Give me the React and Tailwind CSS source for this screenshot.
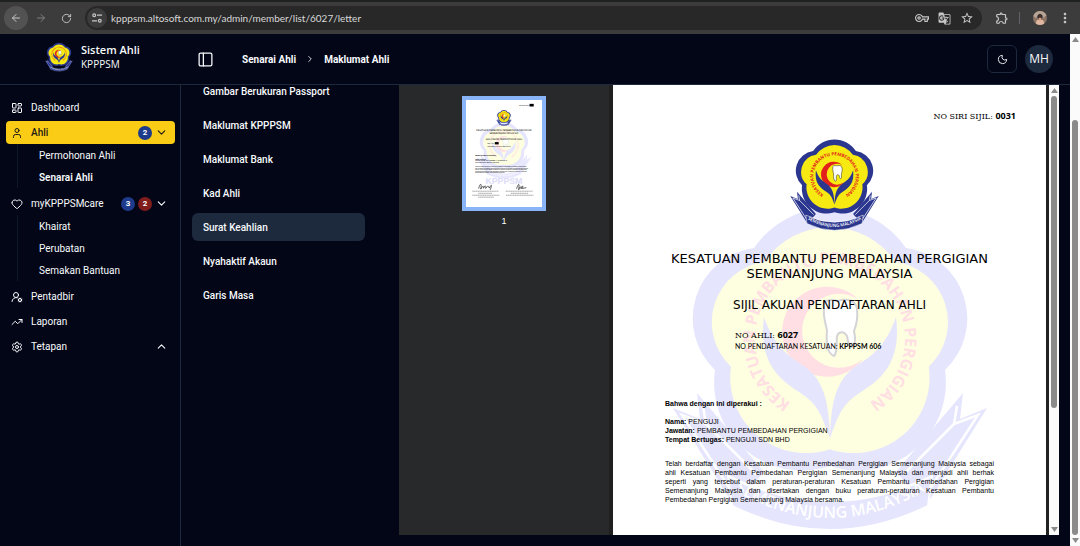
import { useId } from "react";
import {
  ArrowLeft, ArrowRight, ChevronDown, ChevronRight, ChevronUp, Heart, LayoutDashboard,
  Moon, PanelLeft, RotateCw, Settings, TrendingUp, User, UserRoundCog,
} from "lucide-react";
import { MdGTranslate, MdMoreVert, MdOutlineExtension, MdOutlineVpnKey, MdStarBorder } from "react-icons/md";

const FULL = { blue: "#2b378f", yellow: "#f6ea12", red: "#e3211c", line: "#333333" };
const PALE = { blue: "#e5e5fd", yellow: "#fefee0", red: "#ffdfe3", line: "#d4d4d8" };
const FLOWER =
  "M82 42A92 92 0 0 1 234 42A71 71 0 0 1 273 164A88 88 0 0 1 158 260A88 88 0 0 1 43 164A71 71 0 0 1 82 42Z";

function EmblemArt({ c }) {
  const id = useId();
  const leaf = "M92 111C102 140 116 150 132 160C152 174 157 196 158 232C150 212 148 200 130 188C108 174 86 158 92 111Z";
  const tail = "M25 187L92 266L62 300L1 202L28 213Z";
  const tailLine = "M31 200L34 218L10 209L60 286M34 218L84 268";
  return (
    <g>
      <path d={FLOWER} fill={c.blue} />
      <path d={FLOWER} fill={c.yellow} transform="translate(22 19.6) scale(.86)" />
      <path id={id + "t"} d="M121 198A75 75 0 1 1 195 198" fill="none" />
      <text fontFamily="'Open Sans', sans-serif" fontWeight="700" fontSize="16" fill={c.red} textAnchor="middle">
        <textPath href={"#" + id + "t"} startOffset="50%">KESATUAN PEMBANTU PEMBEDAHAN PERGIGIAN</textPath>
      </text>
      <path d="M186 93A45 45 0 1 0 191 153A37 37 0 1 1 186 93Z" fill={c.red} />
      <path
        d="M152 102C150 94 158 93 166 95C174 92 184 94 185 103C186 112 184 120 182 125C184 134 183 139 180 141C177 141 176 136 175 130C172 125 167 125 165 130C164 138 166 146 162 150C155 147 154 138 155 124C153 116 151 110 152 102Z"
        fill="#fff" stroke={c.line} strokeWidth="2"
      />
      <path d={leaf} fill={c.blue} />
      <path d={leaf} fill={c.blue} transform="translate(316 0) scale(-1 1)" />
      {["", "translate(316 0) scale(-1 1)"].map((t) => (
        <g key={t} transform={t}>
          <path d={tail} fill={c.blue} />
          <path d={tailLine} stroke="#fff" strokeWidth="2.5" fill="none" />
        </g>
      ))}
      <path d="M56 270Q158 320 260 270L256 300Q158 348 60 300Z" fill={c.blue} stroke="#fff" strokeWidth="2" />
      <path id={id + "b"} d="M40 270Q158 354 276 270" fill="none" />
      <text fontFamily="'Open Sans', sans-serif" fontWeight="600" fontSize="16" fill="#fff" textAnchor="middle">
        <textPath href={"#" + id + "b"} startOffset="50%">SEMENANJUNG MALAYSIA</textPath>
      </text>
    </g>
  );
}

function Emblem({ pale, className }) {
  return (
    <svg viewBox="0 0 316 326" className={className} aria-hidden="true">
      <EmblemArt c={pale ? PALE : FULL} />
    </svg>
  );
}

function BrowserBar() {
  const btn = "flex size-6 items-center justify-center rounded-full";
  return (
    <div className="flex h-[34px] shrink-0 items-center border-t-2 border-[#1f2020] bg-[#3c3c3c] pl-1 pr-[7px] text-[#c7c7c7]">
      <button aria-label="Back" className={btn + " bg-[#525252]"}><ArrowLeft size={12} /></button>
      <button aria-label="Forward" className={btn + " ml-px text-[#808080]"}><ArrowRight size={12} /></button>
      <button aria-label="Reload" className={btn + " ml-px"}><RotateCw size={11} /></button>
      <div className="ml-[7px] flex h-6 flex-1 items-center rounded-full bg-[#282828] pl-[2px] pr-2">
        <button aria-label="Site information" className="flex size-5 items-center justify-center rounded-full bg-[#3c3c3c]">
          <svg viewBox="0 0 12 12" className="size-3" fill="none" stroke="currentColor" strokeWidth="1.2">
            <circle cx="3.2" cy="3.2" r="1.4" /><path d="M6 3.2H11M1 8.8H6" /><circle cx="8.8" cy="8.8" r="1.4" />
          </svg>
        </button>
        <input
          aria-label="Address"
          readOnly
          className="ml-1 min-w-0 flex-1 bg-transparent font-[Lato,sans-serif] text-[10px] text-[#d8d8d8] outline-none"
          value="kpppsm.altosoft.com.my/admin/member/list/6027/letter"
        />
        <div className="flex items-center gap-[9px]">
          <button aria-label="Passwords"><MdOutlineVpnKey size={14} /></button>
          <button aria-label="Translate"><MdGTranslate size={13} /></button>
          <button aria-label="Bookmark"><MdStarBorder size={14} /></button>
        </div>
      </div>
      <button aria-label="Extensions" className="ml-[13px]"><MdOutlineExtension size={14} /></button>
      <span className="ml-[10px] h-3 w-px bg-[#5f6368]" />
      <button aria-label="Profile" className="ml-[13px] size-[14px] overflow-hidden rounded-full">
        <svg viewBox="0 0 14 14">
          <rect width="14" height="14" fill="#8b7466" />
          <path d="M0 0H14V4L10 7L7 2L3 7L0 5Z" fill="#b9a596" />
          <circle cx="7" cy="5.5" r="2.6" fill="#3b2f2c" />
          <path d="M2 14L4 9H10L12 14Z" fill="#e0b7a0" />
          <circle cx="7" cy="8" r="1.6" fill="#d59c80" />
        </svg>
      </button>
      <button aria-label="Menu" className="ml-[10px]"><MdMoreVert size={16} /></button>
    </div>
  );
}

function Badge({ tone, children }) {
  return (
    <span className={"flex size-[14px] items-center justify-center rounded-full text-[8px] font-bold text-white " + (tone === "red" ? "bg-[#7f1d1d]" : "bg-[#1e3a8a]")}>
      {children}
    </span>
  );
}

function NavRow({ icon: Icon, label, active, badges = [], chevron: Chevron }) {
  return (
    <a
      href="#"
      className={"flex h-[23px] items-center rounded-sm pl-[5px] pr-[7px] text-[10px] " + (active ? "bg-[#facc15] font-medium text-[#1c1917]" : "text-slate-50")}
    >
      <Icon size={12} strokeWidth={2} />
      <span className="ml-2 flex-1">{label}</span>
      <span className="flex items-center gap-[3px]">
        {badges.map(([n, tone]) => <Badge key={tone} tone={tone}>{n}</Badge>)}
      </span>
      {Chevron && <Chevron size={13} className="ml-[3px]" />}
    </a>
  );
}

function SubNav({ items }) {
  return (
    <div className="-mt-[2px] mb-[2px] ml-[11px] flex flex-col border-l border-slate-900 pl-[21px] text-[10px] text-slate-50">
      {items.map(([label, bold]) => (
        <a key={label} href="#" className={"flex h-[22px] items-center " + (bold ? "font-semibold" : "")}>{label}</a>
      ))}
    </div>
  );
}

function Sidebar() {
  return (
    <nav aria-label="Utama" className="flex w-[181px] shrink-0 flex-col gap-[2px] border-r border-slate-800 pl-[6px] pr-[5px] pt-[11px] font-[Roboto,sans-serif]">
      <NavRow icon={LayoutDashboard} label="Dashboard" />
      <NavRow icon={User} label="Ahli" active badges={[["2", "blue"]]} chevron={ChevronDown} />
      <SubNav items={[["Permohonan Ahli"], ["Senarai Ahli", true]]} />
      <NavRow icon={Heart} label="myKPPPSMcare" badges={[["3", "blue"], ["2", "red"]]} chevron={ChevronDown} />
      <SubNav items={[["Khairat"], ["Perubatan"], ["Semakan Bantuan"]]} />
      <NavRow icon={UserRoundCog} label="Pentadbir" />
      <NavRow icon={TrendingUp} label="Laporan" />
      <NavRow icon={Settings} label="Tetapan" chevron={ChevronUp} />
    </nav>
  );
}

function Header() {
  return (
    <header className="flex h-[51px] shrink-0 items-center border-b border-slate-800 pr-[17px] text-slate-50">
      <div className="flex w-[181px] items-center pl-[45px]">
        <Emblem className="mb-1 h-[30px] w-7" />
        <div className="ml-2 pb-1 text-[11px] leading-[14px]">
          <div className="font-semibold">Sistem Ahli</div>
          <div className="text-[10px]">KPPPSM</div>
        </div>
      </div>
      <button aria-label="Toggle sidebar" className="ml-4"><PanelLeft size={17} strokeWidth={1.8} /></button>
      <nav aria-label="Breadcrumb" className="ml-7 flex items-center font-[Roboto,sans-serif] text-[10px] font-bold">
        <a href="#">Senarai Ahli</a>
        <ChevronRight size={10} className="mx-[9px]" />
        <a href="#">Maklumat Ahli</a>
      </nav>
      <button aria-label="Theme" className="ml-auto flex h-7 w-[30px] items-center justify-center rounded-md border border-slate-800">
        <Moon size={11} />
      </button>
      <button className="ml-2 size-7 rounded-full bg-slate-800 text-[12px] font-medium">MH</button>
    </header>
  );
}

function SubMenu() {
  const items = ["Gambar Berukuran Passport", "Maklumat KPPPSM", "Maklumat Bank", "Kad Ahli", "Surat Keahlian", "Nyahaktif Akaun", "Garis Masa"];
  return (
    <nav aria-label="Ahli" className="-mt-2 flex w-[218px] shrink-0 flex-col gap-[6px] pl-[11px] pr-[34px] font-[Roboto,sans-serif] text-[10px] font-medium text-slate-50">
      {items.map((t) => (
        <a key={t} href="#" className={"flex h-7 shrink-0 items-center rounded-md px-[11px] " + (t === "Surat Keahlian" ? "bg-slate-800" : "")}>{t}</a>
      ))}
    </nav>
  );
}

function Thumbnail() {
  return (
    <button aria-label="Page 1" className="border-4 border-[#8ab4f8] bg-white">
      <svg viewBox="0 0 433 610" className="h-[107px] w-[76px]" fontFamily="'Liberation Sans', sans-serif" fontSize="9">
        <g transform="translate(58 124)"><EmblemArt c={PALE} /></g>
        <text x="216" y="480" textAnchor="middle" fontSize="50" fontWeight="700" fill="#dcdcf8">KPPPSM</text>
        <g transform="translate(172 56) scale(.28)"><EmblemArt c={FULL} /></g>
        <text x="303" y="36">NO SIRI SIJIL:</text>
        <rect x="362" y="22" width="24" height="15" />
        <g fontFamily="'DejaVu Sans', sans-serif" fontSize="13" textAnchor="middle">
          <text x="216" y="178">KESATUAN PEMBANTU PEMBEDAHAN PERGIGIAN</text>
          <text x="216" y="194">SEMENANJUNG MALAYSIA</text>
          <text x="216" y="226">SIJIL AKUAN PENDAFTARAN AHLI</text>
        </g>
        <text x="122" y="253">NO AHLI:</text>
        <rect x="164" y="240" width="22" height="13" />
        <text x="122" y="266">NO PENDAFTARAN KESATUAN:</text>
        <text x="52" y="322" fontWeight="700">Bahwa dengan ini diperakui :</text>
        <g fontSize="8">
          <text x="52" y="341" fontWeight="700">Nama: PENGUJI</text>
          <text x="52" y="350">Jawatan: PEMBANTU PEMBEDAHAN PERGIGIAN</text>
          <text x="52" y="359">Tempat Bertugas: PENGUJI SDN BHD</text>
          <text x="52" y="383">Telah berdaftar dengan Kesatuan Pembantu Pembedahan Pergigian Semenanjung</text>
          <text x="52" y="392">ahli Kesatuan Pembantu Pembedahan Pergigian Semenanjung Malaysia dan menjadi</text>
          <text x="52" y="401">seperti yang tersebut dalam peraturan-peraturan Kesatuan Pembantu Pembedahan</text>
          <text x="52" y="410">Semenanjung Malaysia dan disertakan dengan buku peraturan-peraturan Kesatuan</text>
          <text x="52" y="419">Pembedahan Pergigian Semenanjung Malaysia</text>
        </g>
        <g fill="none" stroke="#222" strokeWidth="4">
          <path d="M72 505C80 470 92 474 84 508C96 486 100 488 100 503C110 480 114 490 112 504C126 484 130 492 132 502C146 478 150 480 138 512" />
          <path d="M288 506C300 470 306 474 300 512C310 488 312 492 314 506C322 480 328 490 320 504L344 500" />
        </g>
        <g stroke="#555" strokeWidth="3" strokeDasharray="8 2">
          <path d="M36 520H186M226 520H380M70 532H150M256 532H354M36 543H190M228 543H384M70 554H160" />
        </g>
      </svg>
    </button>
  );
}

const STATEMENT = [
  "Telah berdaftar dengan Kesatuan Pembantu Pembedahan Pergigian Semenanjung Malaysia sebagai",
  "ahli Kesatuan Pembantu Pembedahan Pergigian Semenanjung Malaysia dan menjadi ahli berhak",
  "seperti yang tersebut dalam peraturan-peraturan Kesatuan Pembantu Pembedahan Pergigian",
  "Semenanjung Malaysia dan disertakan dengan buku peraturan-peraturan Kesatuan Pembantu",
  "Pembedahan Pergigian Semenanjung Malaysia bersama.",
];

function Certificate() {
  return (
    <article className="relative min-w-0 flex-1 overflow-hidden bg-white px-[52px] text-black">
      <Emblem pale className="absolute left-1/2 top-[121px] w-[316px] -translate-x-1/2" />
      <div className="relative">
        <p className="-mr-[22px] pt-[25px] text-right font-['DejaVu_Serif',serif] text-[8px] leading-3">
          NO SIRI SIJIL: <b className="font-['Open_Sans',sans-serif] text-[9px]">0031</b>
        </p>
        <div className="mt-4 flex justify-center pl-[10px]"><Emblem className="h-[92px] w-[89px]" /></div>
        <div className="mt-5 text-center font-['DejaVu_Sans',sans-serif]">
          <h1 className="-mx-4 text-[13px] leading-[15px]">KESATUAN PEMBANTU PEMBEDAHAN PERGIGIAN<br />SEMENANJUNG MALAYSIA</h1>
          <h2 className="mt-[17px] text-[12px] leading-[15px]">SIJIL AKUAN PENDAFTARAN AHLI</h2>
        </div>
        <div className="ml-[70px] mt-4">
          <p className="font-['DejaVu_Serif',serif] text-[8px] leading-3">NO AHLI: <b className="font-['Open_Sans',sans-serif] text-[9px]">6027</b></p>
          <p className="font-['Lato',sans-serif] text-[7px] leading-[9px]">NO PENDAFTARAN KESATUAN: <b>KPPPSM 606</b></p>
        </div>
        <div className="mt-[48px] font-['Liberation_Sans',sans-serif] text-[7px] leading-[9px]">
          <p className="font-bold">Bahwa dengan ini diperakui :</p>
          <p className="mt-[9px]"><b>Nama:</b> PENGUJI</p>
          <p><b>Jawatan:</b> PEMBANTU PEMBEDAHAN PERGIGIAN</p>
          <p><b>Tempat Bertugas:</b> PENGUJI SDN BHD</p>
          <p className="mt-[15px]">
            {STATEMENT.map((line, i) => (
              <span key={line} className={"block " + (i < 4 ? "[text-align-last:justify]" : "")}>{line} </span>
            ))}
          </p>
        </div>
      </div>
    </article>
  );
}

function ScrollBar({ thumb }) {
  return (
    <div aria-hidden="true" className="flex w-[10px] shrink-0 flex-col items-center bg-[#fbfbfb] py-[3px] text-[#8b8b8b]">
      <svg viewBox="0 0 7 5" className="h-[5px] w-[7px]"><path d="M0 5L3.500 0L7 5Z" fill="currentColor" /></svg>
      <div className="flex min-h-0 w-full flex-1 flex-col items-center py-[3px]">{thumb}</div>
      <svg viewBox="0 0 7 5" className="h-[5px] w-[7px]"><path d="M0 0L3.500 5L7 0Z" fill="currentColor" /></svg>
    </div>
  );
}

function Viewer() {
  return (
    <section aria-label="Surat keahlian" className="mb-[11px] mr-[11px] flex min-w-0 flex-1 bg-[#28292a]">
      <div className="flex w-[210px] shrink-0 flex-col items-center pt-[11px]">
        <Thumbnail />
        <span className="mt-1 font-['Liberation_Sans',sans-serif] text-[9px] leading-3 text-white">1</span>
      </div>
      <div className="flex min-w-0 flex-1 border-l-4 border-[#1f1f20]">
        <Certificate />
        <div className="w-[3px] bg-[#222]" />
        <ScrollBar thumb={<div className="h-[73%] w-[6px] rounded-full bg-[#8b8b8b]" />} />
      </div>
    </section>
  );
}

export default function App() {
  return (
    <div className="flex h-screen flex-col overflow-hidden bg-[#020617] font-['Open_Sans',sans-serif]">
      <BrowserBar />
      <div className="flex min-h-0 flex-1">
        <div className="flex min-w-0 flex-1 flex-col">
          <Header />
          <div className="flex min-h-0 flex-1 overflow-hidden">
            <Sidebar />
            <SubMenu />
            <Viewer />
          </div>
        </div>
        <ScrollBar thumb={<div className="mt-[75px] w-[6px] flex-1 rounded-full bg-[#8b8b8b]" />} />
      </div>
    </div>
  );
}
